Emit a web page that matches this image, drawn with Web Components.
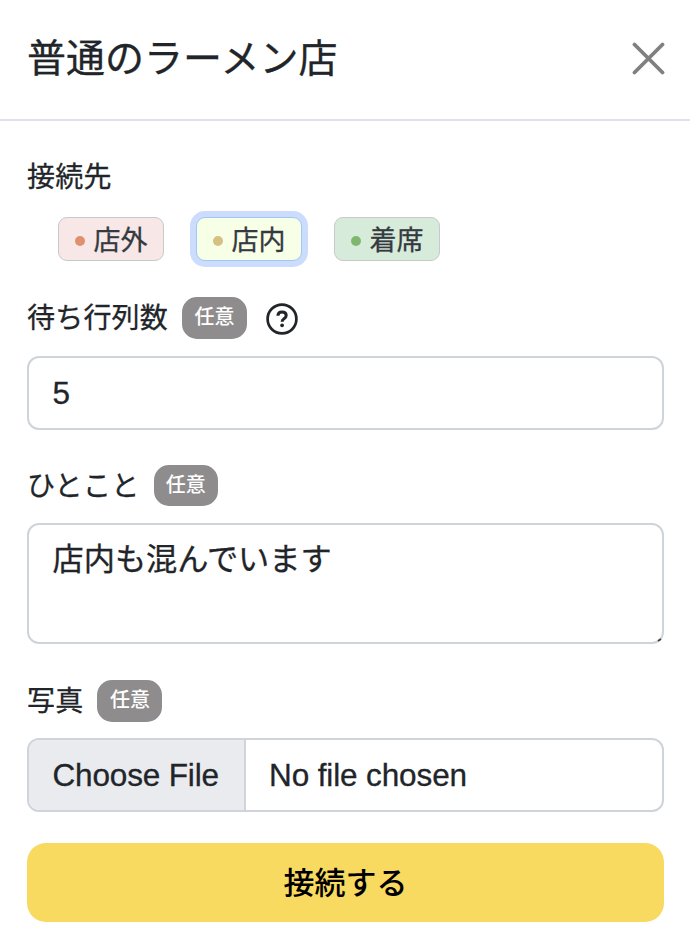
<!DOCTYPE html>
<html lang="ja">
<head>
<meta charset="utf-8">
<title>普通のラーメン店</title>
<style>
html,body{margin:0;background:#fff}
body{font-family:"Liberation Sans","Noto Sans CJK JP",sans-serif;color:#212529;width:690px;height:948px;overflow:hidden;-webkit-text-stroke:.3px}
</style>
</head>
<body>
<shop-dialog>
  <span slot="title">普通のラーメン店</span>
  <field-label style="--h:42px">接続先</field-label>
  <place-options>
    <place-chip style="--bg:#f7e7e6;--dot:#e0906f">店外</place-chip>
    <place-chip selected style="--bg:#f7ffe7;--dot:#d7c083">店内</place-chip>
    <place-chip style="--bg:#d7ebda;--dot:#80b76f">着席</place-chip>
  </place-options>
  <field-label style="--h:42px;--mt:36px;--mb:17px">待ち行列数<optional-badge slot="extra">任意</optional-badge><help-icon slot="extra"></help-icon></field-label>
  <text-control style="--h:74px;--lh:70px">5</text-control>
  <field-label style="--h:41px;--mt:35px;--mb:17px;--ls:.4px">ひとこと<optional-badge slot="extra" style="--w:64px;--h:41px">任意</optional-badge></field-label>
  <text-control multiline style="--h:121px;--lh:70px">店内も混んでいます</text-control>
  <field-label style="--h:42px;--mt:36px;--mb:16px">写真<optional-badge slot="extra">任意</optional-badge></field-label>
  <file-control><span slot="button">Choose File</span>No file chosen</file-control>
  <submit-button>接続する</submit-button>
</shop-dialog>
<script>
const define = (name, markup) => customElements.define(name, class extends HTMLElement {
  constructor() {
    super();
    const t = document.createElement('template');
    t.innerHTML = markup;
    this.attachShadow({mode: 'open'}).append(t.content.cloneNode(true));
  }
});

define('shop-dialog', `<style>
:host{display:block}
header{display:flex;align-items:center;justify-content:space-between;box-sizing:border-box;height:121px;padding:0 25px 2px 27px;border-bottom:2px solid #dee2e6}
h1{margin:0;font-size:39px;font-weight:400;line-height:58px;white-space:nowrap}
svg{display:block}
main{display:flex;flex-direction:column;padding:35px 26px 0 27px}
</style>
<header><h1><slot name="title"></slot></h1>
<svg width="33" height="33" viewBox="0 0 33 33" fill="none" stroke="#808080" stroke-width="3.8" stroke-linecap="round"><path d="M2.5 2.5 30.5 30.5M30.5 2.5 2.5 30.5"/></svg></header>
<main><slot></slot></main>`);

define('field-label', `<style>
:host{display:flex;align-items:center;height:var(--h);margin-top:var(--mt,0);margin-bottom:var(--mb,0);font-size:28px;line-height:40px;white-space:nowrap}
.text{padding-top:2px;letter-spacing:var(--ls,.2px)}
</style><span class="text"><slot></slot></span><slot name="extra"></slot>`);

define('place-options', `<style>
:host{display:flex;gap:32px;height:44px;margin-top:19px;padding-left:31px}
</style><slot></slot>`);

define('place-chip', `<style>
:host{display:flex;align-items:center;box-sizing:border-box;width:106px;height:44px;padding:0 0 0 15.5px;border:1.5px solid #c9c9c9;border-radius:9px;background:var(--bg);color:#343a40;font-size:27px;line-height:38px;white-space:nowrap}
:host([selected]){border-color:#9fc8f4;box-shadow:0 0 0 6px #cbdcfd}
i{width:10px;height:10px;margin:4px 9px 0 0;border-radius:50%;background:var(--dot)}
span{padding-top:3px}
</style><i></i><span><slot></slot></span>`);

define('optional-badge', `<style>
:host{display:block;box-sizing:border-box;width:var(--w,65px);height:var(--h,42px);margin-left:14px;border-radius:15px;background:#8f8c8d;color:#fff;font-size:20px;font-weight:500;line-height:40px;text-align:center;letter-spacing:0;-webkit-text-stroke:0}
</style><slot></slot>`);

define('help-icon', `<style>
:host{display:block;margin:2px 0 0 19px}
svg{display:block}
</style><svg width="32" height="32" viewBox="0 0 32 32" fill="none" stroke="#212529"><circle cx="16" cy="16" r="14.4" stroke-width="2.7"/><path d="M11.9 12.7C12 10.2 13.6 9 16 9c2.5 0 4.2 1.4 4.2 3.5 0 1.6-.8 2.4-2.2 3.3-1.4.9-1.9 1.5-1.9 3" stroke-width="3"/><circle cx="16.1" cy="22.3" r="1.9" fill="#212529" stroke="none"/></svg>`);

define('text-control', `<style>
:host{display:flex;justify-content:space-between;box-sizing:border-box;height:var(--h);padding-left:23.5px;border:2px solid #ced4da;border-radius:12px;font-size:31.5px;line-height:var(--lh);white-space:nowrap}
:host([multiline]){font-size:31.2px}
svg{display:none;align-self:flex-end}
:host([multiline]) svg{display:block}
</style><span><slot></slot></span><svg width="5" height="5" viewBox="0 0 5 5"><path d="M1 4 4 2" stroke="#444" stroke-width="2"/></svg>`);

define('file-control', `<style>
:host{display:flex;box-sizing:border-box;height:74px;border:2px solid #ced4da;border-radius:12px;overflow:hidden;font-size:31.5px;letter-spacing:-.12px;line-height:71px;white-space:nowrap}
.button{box-sizing:border-box;width:217px;padding-left:23.5px;background:#e9ebef;border-right:2px solid #ced4da;letter-spacing:-.15px}
.name{padding-left:23px}
</style><span class="button"><slot name="button"></slot></span><span class="name"><slot></slot></span>`);

define('submit-button', `<style>
:host{display:block;height:79px;margin-top:31px;border-radius:19px;background:#f8da60;color:#000;font-size:31px;font-weight:500;line-height:81px;text-align:center;-webkit-text-stroke:0}
</style><slot></slot>`);
</script>
</body>
</html>
